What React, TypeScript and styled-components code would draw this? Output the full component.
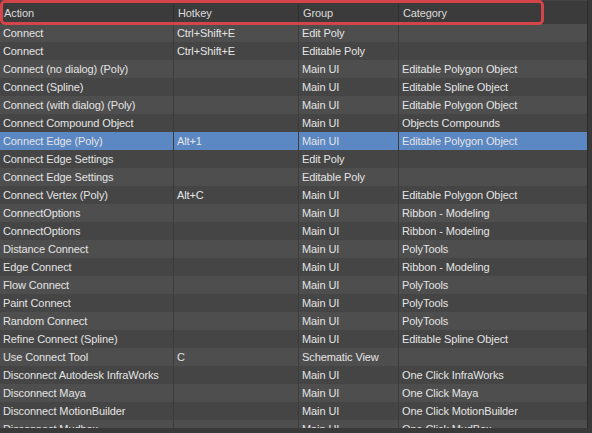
import React from "react";
import styled, { createGlobalStyle } from "styled-components";

const Global = createGlobalStyle`
  html, body { margin: 0; padding: 0; background: #393939; }
  body { font-family: "Liberation Sans", Arial, sans-serif; }
`;

const COLS = "174px 125px 100px 145px 1fr";
const BODY_COLS = "174px 125px 100px 1fr";

const Frame = styled.div`
  width: 592px;
  height: 433px;
  background: #393939;
  overflow: hidden;
  display: flex;
  flex-direction: column;
`;

const Viewport = styled.div`
  position: relative;
  width: 587px;
  height: 428px;
  overflow: hidden;
  border-right: 1px solid #2c2c2c;
  background: #474747;
`;

const Header = styled.div`
  display: grid;
  grid-template-columns: ${COLS};
  height: 24px;
  background: #3b3b3b;
  border-top: 1px solid #454545;
  box-sizing: border-box;
`;

const HeadCell = styled.div<{ $last?: boolean }>`
  display: flex;
  align-items: center;
  padding-left: ${(p) => (p.$last ? 0 : 4)}px;
  color: #dcdcdc;
  font-size: 11px;
  letter-spacing: -0.1px;
  border-right: ${(p) => (p.$last ? "none" : "1px solid #303030")};
  box-sizing: border-box;
`;

const Row = styled.div<{ $odd: boolean; $sel: boolean }>`
  display: grid;
  grid-template-columns: ${BODY_COLS};
  height: 18px;
  background: ${(p) => (p.$sel ? "#5b87c3" : p.$odd ? "#454545" : "#4e4e4e")};
`;

const Cell = styled.div<{ $first?: boolean; $last?: boolean }>`
  display: flex;
  align-items: center;
  padding-left: ${(p) => (p.$first ? 3 : 3)}px;
  color: #e4e4e4;
  font-size: 11px;
  letter-spacing: -0.1px;
  white-space: nowrap;
  overflow: hidden;
  border-right: ${(p) => (p.$last ? "none" : "1px solid #3c3c3c")};
  box-sizing: border-box;
`;

const Annotation = styled.div`
  position: absolute;
  left: 0;
  top: 0;
  width: 544px;
  height: 25px;
  border: 3px solid #d4454b;
  border-radius: 5px;
  box-sizing: border-box;
  pointer-events: none;
`;

type R = [string, string, string, string];

const rows: R[] = [
  ["Connect", "Ctrl+Shift+E", "Edit Poly", ""],
  ["Connect", "Ctrl+Shift+E", "Editable Poly", ""],
  ["Connect (no dialog) (Poly)", "", "Main UI", "Editable Polygon Object"],
  ["Connect (Spline)", "", "Main UI", "Editable Spline Object"],
  ["Connect (with dialog) (Poly)", "", "Main UI", "Editable Polygon Object"],
  ["Connect Compound Object", "", "Main UI", "Objects Compounds"],
  ["Connect Edge (Poly)", "Alt+1", "Main UI", "Editable Polygon Object"],
  ["Connect Edge Settings", "", "Edit Poly", ""],
  ["Connect Edge Settings", "", "Editable Poly", ""],
  ["Connect Vertex (Poly)", "Alt+C", "Main UI", "Editable Polygon Object"],
  ["ConnectOptions", "", "Main UI", "Ribbon - Modeling"],
  ["ConnectOptions", "", "Main UI", "Ribbon - Modeling"],
  ["Distance Connect", "", "Main UI", "PolyTools"],
  ["Edge Connect", "", "Main UI", "Ribbon - Modeling"],
  ["Flow Connect", "", "Main UI", "PolyTools"],
  ["Paint Connect", "", "Main UI", "PolyTools"],
  ["Random Connect", "", "Main UI", "PolyTools"],
  ["Refine Connect (Spline)", "", "Main UI", "Editable Spline Object"],
  ["Use Connect Tool", "C", "Schematic View", ""],
  ["Disconnect Autodesk InfraWorks", "", "Main UI", "One Click InfraWorks"],
  ["Disconnect Maya", "", "Main UI", "One Click Maya"],
  ["Disconnect MotionBuilder", "", "Main UI", "One Click MotionBuilder"],
  ["Disconnect Mudbox", "", "Main UI", "One Click MudBox"],
];

export default function App() {
  return (
    <>
      <Global />
      <Frame>
        <Viewport>
          <Header>
            <HeadCell>Action</HeadCell>
            <HeadCell>Hotkey</HeadCell>
            <HeadCell>Group</HeadCell>
            <HeadCell>Category</HeadCell>
            <HeadCell $last />
          </Header>
          {rows.map((r, i) => (
            <Row key={i} $odd={i % 2 === 1} $sel={i === 6}>
              <Cell $first>{r[0]}</Cell>
              <Cell>{r[1]}</Cell>
              <Cell>{r[2]}</Cell>
              <Cell $last>{r[3]}</Cell>
            </Row>
          ))}
          <Annotation />
        </Viewport>
      </Frame>
    </>
  );
}
